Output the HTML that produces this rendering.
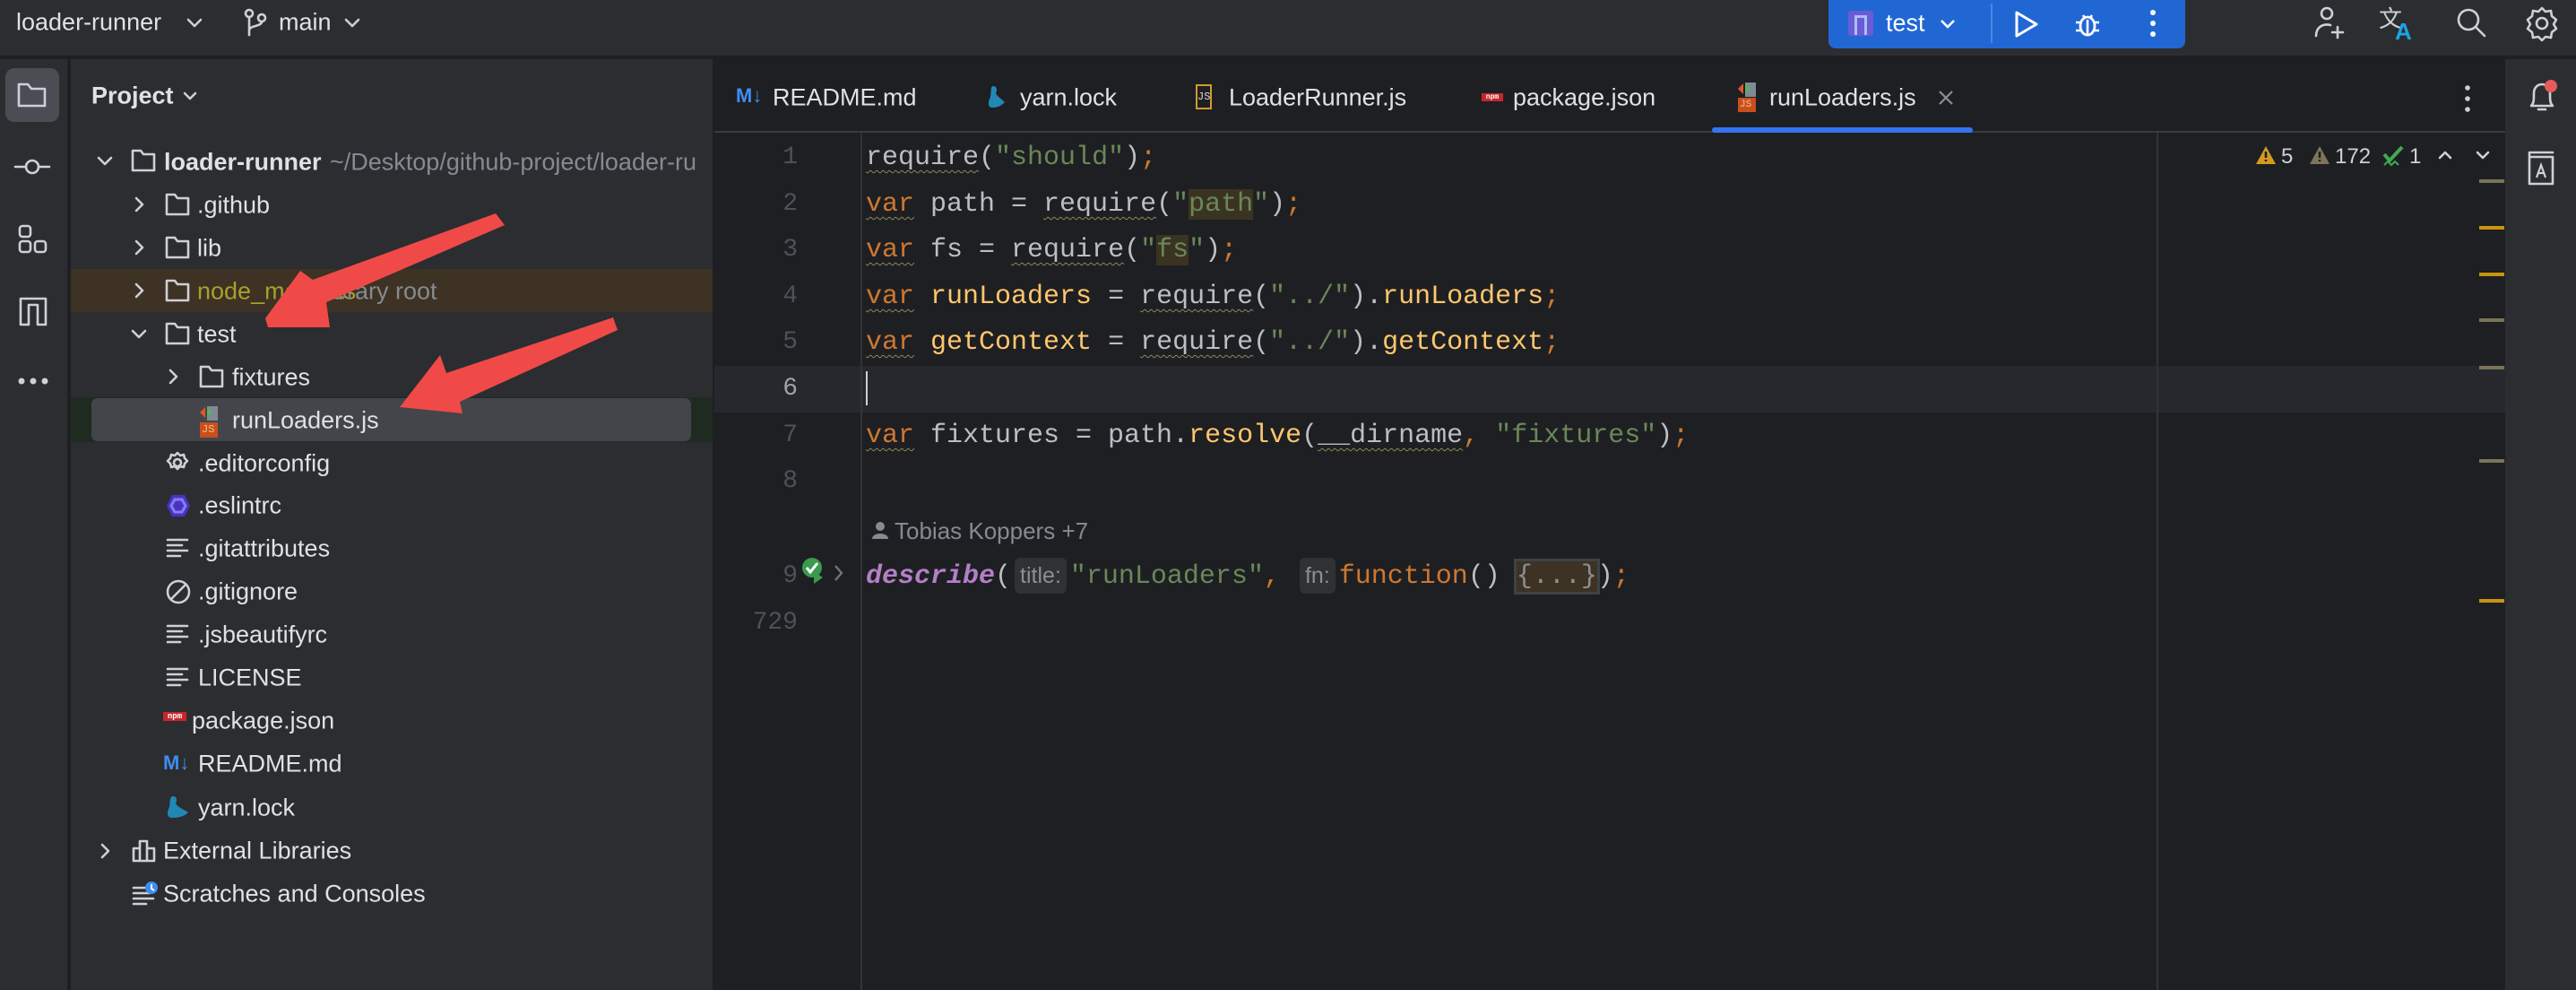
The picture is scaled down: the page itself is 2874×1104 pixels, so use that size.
<!DOCTYPE html>
<html><head><meta charset="utf-8">
<style>
*{margin:0;padding:0;box-sizing:border-box}
body{width:2874px;height:1104px;background:#1e1f22;overflow:hidden;position:relative;font-family:"Liberation Sans",sans-serif;color:#dfe1e5}
.a{position:absolute}
.t{position:absolute;font-size:27px;white-space:nowrap;line-height:1;transform:translateY(-50%)}
.code{position:absolute;left:966px;font-family:"Liberation Mono",monospace;font-size:30px;white-space:pre;color:#bcbec4;transform:translateY(-50%);line-height:1}
.ln{position:absolute;width:60px;left:830px;text-align:right;font-family:"Liberation Mono",monospace;font-size:28px;color:#4e5157;transform:translateY(-50%);line-height:1}
.k{color:#cc7832}.s{color:#6a8759}.g{color:#ffc66d}.p{color:#cc7832}
.w{text-decoration:underline wavy #8a8a5a;text-underline-offset:6px;text-decoration-thickness:1px}
.hint{font-family:"Liberation Sans",sans-serif;font-size:25px;color:#8b8e94;background:#303134;border-radius:6px;padding:6px 6px;margin:0 4px}
svg{position:absolute;overflow:visible}
.st{fill:none;stroke:#ced0d6;stroke-width:2.6;stroke-linecap:round;stroke-linejoin:round}
.mark{position:absolute;left:2766px;width:28px;height:4px;background:#7a7458}
</style></head><body>
<!-- top bar -->
<div class="a" style="left:0;top:0;width:2874px;height:64px;background:#2b2d30;border-bottom:2px solid #1e1f22"></div>
<div class="t" style="left:18px;top:25px;font-size:27px">loader-runner</div>
<svg style="left:208px;top:18px" width="18" height="14"><path class="st" d="M2 4l7 7 7-7"/></svg>
<svg style="left:272px;top:10px" width="28" height="30"><circle class="st" cx="6" cy="5" r="4"/><circle class="st" cx="20" cy="10" r="4"/><path class="st" d="M6 9v20M20 14c0 6-14 4-14 10"/></svg>
<div class="t" style="left:311px;top:25px">main</div>
<svg style="left:384px;top:18px" width="18" height="14"><path class="st" d="M2 4l7 7 7-7"/></svg>
<!-- run widget -->
<div class="a" style="left:2040px;top:0;width:398px;height:54px;background:#2167d4;border-radius:0 0 8px 8px"></div>
<div class="a" style="left:2062px;top:12px;width:28px;height:28px;background:#6a5bd6;border-radius:3px"></div>
<div class="a" style="left:2069px;top:17px;width:14px;height:22px;border:3px solid #aabff5;border-bottom:none"></div>
<div class="t" style="left:2104px;top:26px;color:#fff">test</div>
<svg style="left:2164px;top:20px" width="18" height="12"><path d="M2 3l7 7 7-7" fill="none" stroke="#fff" stroke-width="2.6"/></svg>
<div class="a" style="left:2221px;top:4px;width:2px;height:44px;background:#4b86e6"></div>
<svg style="left:2246px;top:12px" width="30" height="30"><path d="M4 2l22 13-22 13z" fill="none" stroke="#fff" stroke-width="3" stroke-linejoin="round"/></svg>
<svg style="left:2314px;top:10px" width="30" height="34"><ellipse cx="15" cy="19" rx="8" ry="10" fill="none" stroke="#fff" stroke-width="2.8"/><path d="M10 7l2 3M20 7l-2 3M2 15h5M23 15h5M2 24h5M23 24h5M15 12v16" stroke="#fff" stroke-width="2.6" fill="none"/></svg>
<svg style="left:2398px;top:10px" width="8" height="34"><circle cx="4" cy="4" r="3" fill="#fff"/><circle cx="4" cy="16" r="3" fill="#fff"/><circle cx="4" cy="28" r="3" fill="#fff"/></svg>
<svg style="left:2580px;top:6px" width="40" height="40"><circle class="st" cx="16" cy="9" r="6"/><path class="st" d="M4 34c0-10 8-14 16-12M28 24v12M22 30h12"/></svg>
<svg style="left:2654px;top:6px" width="44" height="40"><text x="0" y="24" font-size="26" fill="#ced0d6" font-family="Noto Sans CJK SC">文</text><text x="18" y="38" font-size="26" fill="#1aa3e8" font-weight="bold" font-family="Liberation Sans">A</text></svg>
<svg style="left:2740px;top:8px" width="36" height="36"><circle class="st" cx="14" cy="14" r="11"/><path class="st" d="M22 22l10 10"/></svg>
<svg style="left:2818px;top:6px" width="36" height="40"><circle class="st" cx="18" cy="20" r="6"/><path class="st" d="M18 3l4 4 6-1 1 6 5 4-3 5 3 5-5 4-1 6-6-1-4 4-4-4-6 1-1-6-5-4 3-5-3-5 5-4 1-6 6 1z"/></svg>

<!-- left strip -->
<div class="a" style="left:0;top:66px;width:77px;height:1038px;background:#2b2d30;border-right:2px solid #1e1f22"></div>
<div class="a" style="left:6px;top:76px;width:60px;height:60px;background:#4a4d54;border-radius:10px"></div>
<svg style="left:18px;top:90px" width="36" height="32"><path class="st" d="M3 4h10l4 5h15v19H3z"/></svg>
<svg style="left:15px;top:174px" width="42" height="24"><circle class="st" cx="21" cy="12" r="7"/><path class="st" d="M2 12h12M28 12h12"/></svg>
<svg style="left:20px;top:250px" width="34" height="34"><rect class="st" x="2" y="2" width="12" height="12" rx="3"/><rect class="st" x="2" y="19" width="12" height="12" rx="3"/><rect class="st" x="19" y="19" width="12" height="12" rx="3"/></svg>
<svg style="left:20px;top:330px" width="34" height="34"><path class="st" d="M3 32V3h28v29h-9V10h-10v22z"/></svg>
<svg style="left:20px;top:420px" width="34" height="10"><circle cx="4" cy="5" r="3.5" fill="#ced0d6"/><circle cx="17" cy="5" r="3.5" fill="#ced0d6"/><circle cx="30" cy="5" r="3.5" fill="#ced0d6"/></svg>

<!-- project panel -->
<div class="a" style="left:79px;top:66px;width:718px;height:1038px;background:#2b2d30;border-right:2px solid #1e1f22"></div>
<div class="t" style="left:102px;top:107px;font-weight:bold">Project</div>
<svg style="left:204px;top:101px" width="16" height="12"><path class="st" d="M2 3l6 6 6-6"/></svg>
<!-- node_modules highlight -->
<div class="a" style="left:79px;top:300px;width:716px;height:48px;background:#3d3223"></div>
<!-- runLoaders selected -->
<div class="a" style="left:79px;top:443px;width:716px;height:50px;background:#1f2b21"></div>
<div class="a" style="left:102px;top:444px;width:669px;height:48px;background:#43454a;border-radius:7px"></div>

<!-- tree rows -->
<svg style="left:108px;top:174px" width="18" height="12"><path class="st" d="M2 2l7 7 7-7"/></svg>
<svg style="left:146px;top:166px" width="28" height="26"><path class="st" d="M2 2h9l3 4h12v18H2z"/></svg>
<div class="t" style="left:183px;top:181px;font-weight:bold">loader-runner</div>
<div class="t" style="left:368px;top:181px;color:#868a91">~/Desktop/github-project/loader-ru</div>

<svg style="left:150px;top:219px" width="12" height="18"><path class="st" d="M2 2l7 7-7 7"/></svg>
<svg style="left:184px;top:215px" width="28" height="26"><path class="st" d="M2 2h9l3 4h12v18H2z"/></svg>
<div class="t" style="left:220px;top:229px">.github</div>

<svg style="left:150px;top:267px" width="12" height="18"><path class="st" d="M2 2l7 7-7 7"/></svg>
<svg style="left:184px;top:263px" width="28" height="26"><path class="st" d="M2 2h9l3 4h12v18H2z"/></svg>
<div class="t" style="left:220px;top:277px">lib</div>

<svg style="left:150px;top:315px" width="12" height="18"><path class="st" d="M2 2l7 7-7 7"/></svg>
<svg style="left:184px;top:311px" width="28" height="26"><path class="st" d="M2 2h9l3 4h12v18H2z"/></svg>
<div class="t" style="left:220px;top:325px;color:#a7a02c">node_modules</div>
<div class="t" style="left:360px;top:325px;color:#868a91">library root</div>

<svg style="left:146px;top:367px" width="18" height="12"><path class="st" d="M2 2l7 7 7-7"/></svg>
<svg style="left:184px;top:359px" width="28" height="26"><path class="st" d="M2 2h9l3 4h12v18H2z"/></svg>
<div class="t" style="left:220px;top:373px">test</div>

<svg style="left:188px;top:411px" width="12" height="18"><path class="st" d="M2 2l7 7-7 7"/></svg>
<svg style="left:222px;top:407px" width="28" height="26"><path class="st" d="M2 2h9l3 4h12v18H2z"/></svg>
<div class="t" style="left:259px;top:421px">fixtures</div>

<div class="a" style="left:223px;top:471px;width:20px;height:17px;background:#c94f1c;color:#f3c08a;font-size:12px;font-family:'Liberation Mono';padding-left:2px;line-height:17px">JS</div>
<svg style="left:223px;top:453px" width="20" height="16"><rect x="8" y="0" width="12" height="16" fill="#7f8b94"/><path d="M0 7l6-6v12z" fill="#e5532b"/><path d="M8 2l5 5-5 5z" fill="#4dbb4e"/></svg>
<div class="t" style="left:259px;top:469px">runLoaders.js</div>

<svg style="left:185px;top:503px" width="26" height="26"><circle class="st" cx="13" cy="13" r="4"/><path class="st" d="M13 2l3 3 4-1 1 4 3 3-3 3-1 4-4-1-3 3-3-3-4 1-1-4-3-3 3-3 1-4 4 1z"/></svg>
<div class="t" style="left:221px;top:517px">.editorconfig</div>
<svg style="left:185px;top:550px" width="28" height="28"><path d="M7 2h14l6 12-6 12H7L1 14z" fill="#4b32c3"/><path d="M10 7h8l4 7-4 7h-8l-4-7z" fill="none" stroke="#8080f2" stroke-width="3"/></svg>
<div class="t" style="left:221px;top:564px">.eslintrc</div>
<svg style="left:185px;top:600px" width="26" height="22"><path class="st" d="M2 2h22M2 8h16M2 14h22M2 20h14"/></svg>
<div class="t" style="left:221px;top:612px">.gitattributes</div>
<svg style="left:185px;top:646px" width="28" height="28"><circle class="st" cx="14" cy="14" r="12"/><path class="st" d="M6 22L22 6"/></svg>
<div class="t" style="left:221px;top:660px">.gitignore</div>
<svg style="left:185px;top:696px" width="26" height="22"><path class="st" d="M2 2h22M2 8h16M2 14h22M2 20h14"/></svg>
<div class="t" style="left:221px;top:708px">.jsbeautifyrc</div>
<svg style="left:185px;top:744px" width="26" height="22"><path class="st" d="M2 2h22M2 8h16M2 14h22M2 20h14"/></svg>
<div class="t" style="left:221px;top:756px">LICENSE</div>
<div class="a" style="left:182px;top:794px;width:26px;height:10px;background:#c8262b;color:#fff;font-size:9px;font-weight:bold;line-height:10px;text-align:center;font-family:'Liberation Mono'">npm</div>
<div class="t" style="left:214px;top:804px">package.json</div>
<div class="a" style="left:182px;top:840px;font-size:22px;font-weight:bold;color:#3d8ef0;line-height:1">M↓</div>
<div class="t" style="left:221px;top:852px">README.md</div>
<svg style="left:185px;top:886px" width="28" height="28"><path d="M8 2c4 0 5 4 3 8 2 4 8 6 14 10-4 4-10 6-18 6-6 0-6-6-3-12 1-6 0-12 4-12z" fill="#2188b6"/></svg>
<div class="t" style="left:221px;top:901px">yarn.lock</div>

<svg style="left:112px;top:940px" width="12" height="18"><path class="st" d="M2 2l7 7-7 7"/></svg>
<svg style="left:147px;top:936px" width="28" height="26"><path class="st" d="M2 24V10h7V2h8v8h8v14zM9 10v14M17 10v14"/></svg>
<div class="t" style="left:182px;top:949px">External Libraries</div>
<svg style="left:147px;top:982px" width="30" height="28"><path class="st" d="M2 8h14M2 14h18M2 20h22M2 26h14"/><circle cx="22" cy="8" r="7" fill="#3d8ef0"/><path d="M22 4v5l3 2" stroke="#fff" stroke-width="2" fill="none"/></svg>
<div class="t" style="left:182px;top:997px">Scratches and Consoles</div>

<!-- arrows -->
<svg style="left:0;top:0" width="900" height="600">
<polygon fill="#f04a48" points="553,238 563,251 364,337 368,365 299,365 296,355 335,302 349,312" />
<polygon fill="#f04a48" points="684,354 689,368 513,448 516,461 446,454 491,396 498,416" />
</svg>

<!-- tabs -->
<div class="a" style="left:797px;top:146px;width:1998px;height:2px;background:#393b40"></div>
<div class="a" style="left:821px;top:96px;font-size:22px;font-weight:bold;color:#3d8ef0;line-height:1">M↓</div>
<div class="t" style="left:862px;top:109px">README.md</div>
<svg style="left:1100px;top:94px" width="24" height="28"><path d="M8 2c4 0 5 4 3 8 2 4 6 6 10 10-4 4-8 6-14 6-5 0-5-6-2-12 1-6 0-12 3-12z" fill="#2188b6"/></svg>
<div class="t" style="left:1138px;top:109px">yarn.lock</div>
<div class="a" style="left:1334px;top:94px;width:18px;height:28px;border:2px solid #d39b2a;color:#d9d9d9;font-size:12px;line-height:24px;text-align:center;font-family:'Liberation Mono'">JS</div>
<div class="t" style="left:1371px;top:109px">LoaderRunner.js</div>
<div class="a" style="left:1653px;top:104px;width:24px;height:9px;background:#c8262b;color:#fff;font-size:8px;font-weight:bold;line-height:9px;text-align:center;font-family:'Liberation Mono'">npm</div>
<div class="t" style="left:1688px;top:109px">package.json</div>
<div class="a" style="left:1939px;top:109px;width:20px;height:16px;background:#c94f1c;color:#f3c08a;font-size:11px;font-family:'Liberation Mono';padding-left:2px;line-height:16px">JS</div>
<svg style="left:1939px;top:92px" width="20" height="16"><rect x="8" y="0" width="12" height="16" fill="#7f8b94"/><path d="M0 7l6-6v12z" fill="#e5532b"/><path d="M8 2l5 5-5 5z" fill="#4dbb4e"/></svg>
<div class="t" style="left:1974px;top:109px">runLoaders.js</div>
<svg style="left:2162px;top:100px" width="18" height="18"><path d="M2 2l14 14M16 2L2 16" stroke="#8b8e94" stroke-width="2.2"/></svg>
<div class="a" style="left:1910px;top:142px;width:291px;height:6px;background:#3574f0;border-radius:3px"></div>
<svg style="left:2749px;top:94px" width="8" height="34"><circle cx="4" cy="4" r="2.8" fill="#ced0d6"/><circle cx="4" cy="16" r="2.8" fill="#ced0d6"/><circle cx="4" cy="28" r="2.8" fill="#ced0d6"/></svg>

<!-- right strip -->
<div class="a" style="left:2795px;top:66px;width:79px;height:1038px;background:#2b2d30"></div>
<svg style="left:2818px;top:88px" width="40" height="40"><path class="st" d="M6 30c3-3 3-6 3-14 0-6 4-10 9-10s9 4 9 10c0 8 0 11 3 14z M14 34h8"/><circle cx="28" cy="8" r="7" fill="#e55b5b"/></svg>
<svg style="left:2818px;top:166px" width="36" height="42"><path class="st" d="M4 4h26M4 9h26v30H4zM4 4v5"/><path d="M12 32l5-14 5 14M14 27h6" stroke="#ced0d6" stroke-width="2.2" fill="none"/></svg>

<!-- editor -->
<div class="a" style="left:797px;top:408px;width:1998px;height:52px;background:#26282e"></div>
<div class="a" style="left:960px;top:148px;width:2px;height:956px;background:#313338"></div>
<div class="a" style="left:2406px;top:148px;width:2px;height:956px;background:#313338"></div>

<div class="ln" style="top:176px">1</div>
<div class="ln" style="top:228px">2</div>
<div class="ln" style="top:279px">3</div>
<div class="ln" style="top:331px">4</div>
<div class="ln" style="top:382px">5</div>
<div class="ln" style="top:434px;color:#a1a3ab">6</div>
<div class="ln" style="top:486px">7</div>
<div class="ln" style="top:537px">8</div>
<div class="ln" style="top:643px">9</div>
<div class="ln" style="top:695px">729</div>

<div class="code" style="top:176px"><span class="w">require</span>(<span class="s">"should"</span>)<span class="p">;</span></div>
<div class="code" style="top:228px"><span class="k w">var</span> path = <span class="w">require</span>(<span class="s">"<span style="background:#3b3322">path</span>"</span>)<span class="p">;</span></div>
<div class="code" style="top:279px"><span class="k w">var</span> fs = <span class="w">require</span>(<span class="s">"<span style="background:#3b3322">fs</span>"</span>)<span class="p">;</span></div>
<div class="code" style="top:331px"><span class="k w">var</span> <span class="g">runLoaders</span> = <span class="w">require</span>(<span class="s">"../"</span>).<span class="g">runLoaders</span><span class="p">;</span></div>
<div class="code" style="top:382px"><span class="k w">var</span> <span class="g">getContext</span> = <span class="w">require</span>(<span class="s">"../"</span>).<span class="g">getContext</span><span class="p">;</span></div>
<div class="a" style="left:966px;top:414px;width:2px;height:38px;background:#ced0d6"></div>
<div class="code" style="top:486px"><span class="k w">var</span> fixtures = path.<span class="g">resolve</span>(<span class="w">__dirname</span><span class="p">,</span> <span class="s">"fixtures"</span>)<span class="p">;</span></div>
<svg style="left:973px;top:581px" width="18" height="20"><circle cx="9" cy="6" r="5" fill="#868a91"/><path d="M0 20c0-8 18-8 18 0z" fill="#868a91"/></svg>
<div class="t" style="left:998px;top:592px;font-size:26px;color:#868a91">Tobias Koppers +7</div>
<svg style="left:894px;top:621px" width="50" height="36"><circle cx="12" cy="12" r="11" fill="#3a9a4f"/><path d="M6 12l4 5 8-10" stroke="#fff" stroke-width="3" fill="none"/><path d="M14 16l10 7-10 7z" fill="#3a9a4f"/><path d="M38 10l7 8-7 8" stroke="#6f737a" stroke-width="2.4" fill="none"/></svg>
<div class="code" style="top:643px"><i style="color:#b47fc7;font-weight:bold">describe</i>(<span class="hint">title:</span><span class="s">"runLoaders"</span><span class="p">,</span> <span class="hint">fn:</span><span class="k">function</span>() <span style="background:#3d3223;outline:3px solid #3e4247;color:#8b8e94">{...}</span>)<span class="p">;</span></div>

<!-- inspections -->
<svg style="left:2516px;top:162px" width="24" height="22"><path d="M12 1l11 20H1z" fill="#d39a1f"/><path d="M12 7v7M12 16v2" stroke="#1e1f22" stroke-width="2.6"/></svg>
<div class="t" style="left:2545px;top:175px;font-size:24px;color:#ced0d6">5</div>
<svg style="left:2576px;top:162px" width="24" height="22"><path d="M12 1l11 20H1z" fill="#7d7558"/><path d="M12 7v7M12 16v2" stroke="#1e1f22" stroke-width="2.6"/></svg>
<div class="t" style="left:2605px;top:175px;font-size:24px;color:#ced0d6">172</div>
<svg style="left:2658px;top:162px" width="24" height="24"><path d="M2 10l6 7 14-15" stroke="#3fa956" stroke-width="4" fill="none"/><path d="M2 22l4-4 4 4 4-4 4 4" stroke="#3fa956" stroke-width="2" fill="none"/></svg>
<div class="t" style="left:2688px;top:175px;font-size:24px;color:#ced0d6">1</div>
<svg style="left:2720px;top:168px" width="16" height="10"><path class="st" d="M2 8l6-6 6 6"/></svg>
<svg style="left:2762px;top:168px" width="16" height="10"><path class="st" d="M2 2l6 6 6-6"/></svg>
<div class="mark" style="top:200px"></div>
<div class="mark" style="top:252px;background:#c89410"></div>
<div class="mark" style="top:304px;background:#c89410"></div>
<div class="mark" style="top:355px"></div>
<div class="mark" style="top:408px"></div>
<div class="mark" style="top:512px"></div>
<div class="mark" style="top:668px;background:#c89410"></div>
</body></html>
